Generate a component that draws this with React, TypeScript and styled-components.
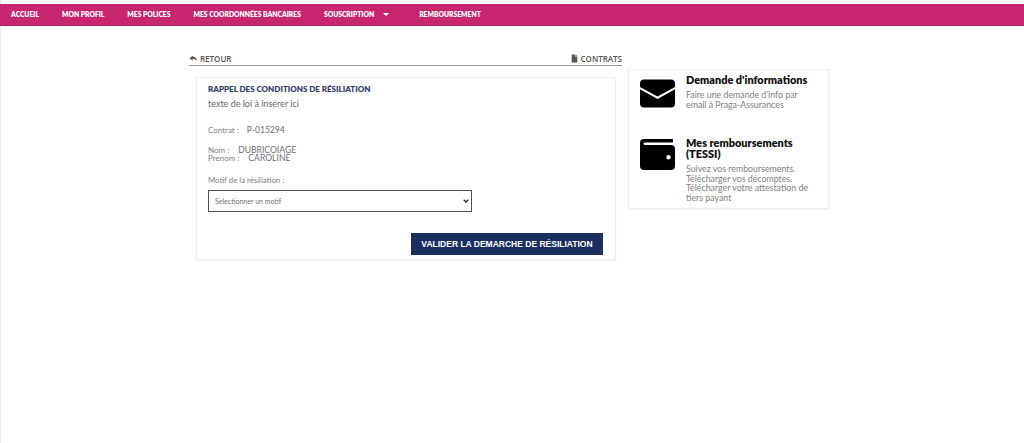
import styled, { createGlobalStyle } from "styled-components";

const GlobalStyle = createGlobalStyle`
  html, body {
    margin: 0;
    background: #fff;
    font-family: Lato, "Open Sans", sans-serif;
    overflow: hidden;
  }
`;

const PageStyled = styled.div`
  height: 443px;
  box-sizing: border-box;
  padding-top: 4px;
  border-left: 1px solid #eee;
`;

const NavStyled = styled.nav`
  height: 22px;
  margin-left: -1px;
  padding: 0 0 1px 11px;
  background: #c7266f;
  border-bottom: 1px solid #b3205f;
  box-sizing: border-box;
  display: flex;
  align-items: center;
  gap: 23px;
  a {
    color: #fff;
    font-family: Lato, sans-serif;
    font-size: 6.75px;
    font-weight: 800;
    white-space: nowrap;
    display: flex;
    align-items: center;
  }
  .caret {
    width: 0;
    height: 0;
    margin-left: 9px;
    border-left: 3px solid transparent;
    border-right: 3px solid transparent;
    border-top: 3px solid #fff;
  }
  .last {
    margin-left: 7px;
  }
`;

const ContentStyled = styled.div`
  display: flex;
  align-items: flex-start;
  gap: 6px;
  padding: 25px 0 0 188px;
`;

const MainColumn = styled.div`
  width: 433px;
`;

const BackBar = styled.div`
  display: flex;
  justify-content: space-between;
  align-items: center;
  height: 14px;
  border-bottom: 1px solid #9a9a9a;
  font-family: "Open Sans", sans-serif;
  font-size: 8px;
  font-weight: 600;
  color: #555;
  span {
    display: flex;
    align-items: center;
    gap: 2px;
  }
  svg {
    width: 9px;
    height: 9px;
    fill: #555;
  }
`;

const CardStyled = styled.section`
  box-sizing: border-box;
  width: 420px;
  height: 183px;
  margin: 11px 0 0 7px;
  padding: 6px 12px 0 11px;
  border: 1px solid #eee;
  box-shadow: 0 1px 2px rgba(0, 0, 0, 0.06);
  color: #666;
  font-size: 8px;
  display: flex;
  flex-direction: column;
  h3 {
    margin: 0;
    font-size: 8px;
    line-height: 10px;
    font-weight: 800;
    color: #35426c;
  }
  .law {
    margin: 4px 0 0;
    font-size: 9px;
    line-height: 12px;
    color: #666;
  }
`;

const FieldRow = styled.div<{ $top: number; $gap: number }>`
  display: flex;
  margin-top: ${({ $top }) => $top}px;
  gap: ${({ $gap }) => $gap}px;
  line-height: 8px;
  font-size: 8px;
  color: #808080;
  b {
    font-weight: 400;
    color: #707070;
    font-size: 8.6px;
  }
`;

const MotifLabel = styled.div`
  margin-top: 13px;
  font-size: 7.8px;
  line-height: 10px;
  color: #808080;
`;

const SelectWrap = styled.div`
  position: relative;
  width: 264px;
  height: 22px;
  margin-top: 5px;
  svg {
    position: absolute;
    right: 3px;
    top: 9px;
    width: 6px;
    height: 4px;
    pointer-events: none;
  }
`;

const SelectStyled = styled.select`
  appearance: none;
  box-sizing: border-box;
  width: 100%;
  height: 100%;
  padding: 0 6px;
  background: #fff;
  border: 1px solid #555;
  border-radius: 0;
  font-family: Lato, sans-serif;
  font-size: 7px;
  color: #707070;
  outline: none;
`;

const SubmitButton = styled.button`
  align-self: flex-end;
  width: 192px;
  height: 22px;
  margin-top: 21px;
  padding: 0;
  border: 0;
  background: #1a2f5f;
  color: #fff;
  font-family: "Liberation Sans", Arial, sans-serif;
  font-size: 8.5px;
  font-weight: 700;
`;

const SidePanel = styled.aside`
  box-sizing: border-box;
  width: 201px;
  height: 140px;
  margin-top: 18px;
  padding: 4px 10px 0 11px;
  border: 1px solid #eee;
  box-shadow: 0 1px 2px rgba(0, 0, 0, 0.05);
`;

const SideItem = styled.div<{ $top: number }>`
  display: flex;
  gap: 11px;
  margin-top: ${({ $top }) => $top}px;
  svg {
    flex: none;
    width: 35px;
    height: 31px;
    margin-top: ${({ $top }) => ($top ? 2 : 4)}px;
  }
  h4 {
    margin: 0;
    font-size: 10.9px;
    line-height: 11px;
    font-weight: 800;
    color: #111;
  }
  p {
    margin: 5px 0 0;
    font-size: 8.8px;
    line-height: 9.5px;
    color: #808080;
  }
`;

const App = () => {
  return (
    <PageStyled>
      <GlobalStyle />
      <NavStyled>
        <a>ACCUEIL</a>
        <a>MON PROFIL</a>
        <a>MES POLICES</a>
        <a>MES COORDONNÉES BANCAIRES</a>
        <a>
          SOUSCRIPTION<i className="caret" />
        </a>
        <a className="last">REMBOURSEMENT</a>
      </NavStyled>
      <ContentStyled>
        <MainColumn>
          <BackBar>
            <span>
              <svg viewBox="0 0 16 16">
                <path d="M6.500 3 1 7.500 6.500 12V9c3.500 0 6 .8 8 3.500-.5-4-3-7.500-8-8z" />
              </svg>
              RETOUR
            </span>
            <span>
              <svg viewBox="0 0 16 16">
                <path d="M3 1h6v4h4v10H3zM10 1l3 3h-3z" />
              </svg>
              CONTRATS
            </span>
          </BackBar>
          <CardStyled>
            <h3>RAPPEL DES CONDITIONS DE RÉSILIATION</h3>
            <p className="law">texte de loi à insérer ici</p>
            <FieldRow $top={16} $gap={8}>
              Contrat : <b>P-015294</b>
            </FieldRow>
            <FieldRow $top={12} $gap={9}>
              Nom : <b>DUBRICOIAGE</b>
            </FieldRow>
            <FieldRow $top={0} $gap={9}>
              Prenom : <b>CAROLINE</b>
            </FieldRow>
            <MotifLabel>Motif de la résiliation :</MotifLabel>
            <SelectWrap>
              <SelectStyled defaultValue="">
                <option value="">Selectionner un motif</option>
              </SelectStyled>
              <svg viewBox="0 0 6 4">
                <path d="M.7.7 3 3l2.300-2.300" fill="none" stroke="#222" strokeWidth="1.300" />
              </svg>
            </SelectWrap>
            <SubmitButton>VALIDER LA DEMARCHE DE RÉSILIATION</SubmitButton>
          </CardStyled>
        </MainColumn>
        <SidePanel>
          <SideItem $top={0}>
            <svg viewBox="0 0 35 28">
              <path d="M4 0h27a4 4 0 0 1 4 4v3.500L17.500 17 0 7.500V4a4 4 0 0 1 4-4z" />
              <path d="M0 9.800l17.500 9.700L35 9.800V24a4 4 0 0 1-4 4H4a4 4 0 0 1-4-4z" />
            </svg>
            <div>
              <h4>Demande d'informations</h4>
              <p>
                Faire une demande d'info par
                <br />
                email à Praga-Assurances
              </p>
            </div>
          </SideItem>
          <SideItem $top={28}>
            <svg viewBox="0 0 35 31">
              <path d="M4 0h29v3.500H4.500a1.300 1.300 0 0 0 0 2.500H31a4 4 0 0 1 4 4v17a4 4 0 0 1-4 4H4a4 4 0 0 1-4-4V4a4 4 0 0 1 4-4zm24.500 16a2.200 2.200 0 1 0 0 4.400 2.200 2.200 0 0 0 0-4.400z" />
            </svg>
            <div>
              <h4>
                Mes remboursements
                <br />
                (TESSI)
              </h4>
              <p>
                Suivez vos remboursements.
                <br />
                Télécharger vos décomptes.
                <br />
                Télécharger votre attestation de
                <br />
                tiers payant
              </p>
            </div>
          </SideItem>
        </SidePanel>
      </ContentStyled>
    </PageStyled>
  );
};

export default App;
